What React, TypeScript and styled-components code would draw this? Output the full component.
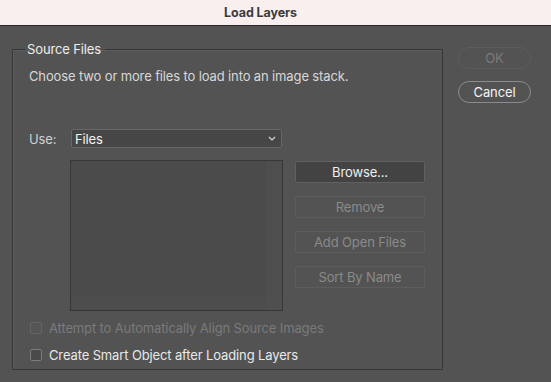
import React from 'react';
import styled, { createGlobalStyle } from 'styled-components';

const GlobalStyle = createGlobalStyle`
  html, body {
    margin: 0;
    padding: 0;
    background: #535353;
  }
  body {
    font-family: Inter, "Noto Sans", "Liberation Sans", sans-serif;
    font-size: 13px;
    letter-spacing: -0.13px;
    -webkit-font-smoothing: antialiased;
  }
`;

const Window = styled.div`
  width: 551px;
  height: 382px;
  background: #535353;
  display: flex;
  flex-direction: column;
  overflow: hidden;
`;

const TitleBar = styled.div`
  height: 26px;
  flex: none;
  box-sizing: border-box;
  padding-right: 30px;
  background: #f8efee;
  border-bottom: 1px solid #262626;
  display: flex;
  align-items: center;
  justify-content: center;
  color: #3b3b3b;
  font-weight: 700;
  font-size: 12.5px;
  letter-spacing: -0.1px;
`;

const Main = styled.div`
  display: flex;
  align-items: flex-start;
  padding: 15px 0 0 12px;
  gap: 15px;
`;

const Group = styled.fieldset`
  width: 431px;
  box-sizing: border-box;
  margin: 0;
  padding: 0;
  border: 1px solid #353535;
  box-shadow: inset 1px 1px 0 #5c5c5c;
  border-radius: 1px;
`;

const Legend = styled.legend`
  margin-left: 12px;
  padding: 0 4px 0 2px;
  line-height: 16px;
  color: #ededed;
  font-size: 13px;
`;

const GroupBody = styled.div`
  padding: 11px 16px 6px 16px;
  display: flex;
  flex-direction: column;
`;

const Description = styled.div`
  line-height: 16px;
  color: #d8d8d8;
`;

const UseRow = styled.div`
  margin-top: 45px;
  display: flex;
  align-items: center;
`;

const Label = styled.span`
  width: 42px;
  color: #d0d0d0;
`;

const Select = styled.div`
  width: 211px;
  height: 19px;
  box-sizing: border-box;
  background: #464646;
  border: 1px solid #676767;
  border-radius: 2px;
  display: flex;
  align-items: center;
  justify-content: space-between;
  padding: 0 5px 0 3px;
  color: #f2f2f2;
`;

const ListRow = styled.div`
  margin-top: 12px;
  display: flex;
  align-items: flex-start;
  padding-left: 41px;
  gap: 12px;
`;

const FileList = styled.div`
  width: 213px;
  height: 151px;
  box-sizing: border-box;
  background: #4b4b4b;
  border: 1px solid #373737;
  display: grid;
  grid-template-columns: 1fr 16px;
  grid-template-rows: 1fr 15px;
`;

const ListArea = styled.div<{ $tone: string }>`
  background: ${(p) => p.$tone};
`;

const ButtonStack = styled.div`
  padding-top: 1px;
  display: flex;
  flex-direction: column;
  gap: 13px;
`;

const SideButton = styled.div<{ $disabled?: boolean }>`
  width: 130px;
  height: 22px;
  box-sizing: border-box;
  border: 1px solid ${(p) => (p.$disabled ? '#5d5d5d' : '#606060')};
  border-radius: 2px;
  background: ${(p) => (p.$disabled ? '#535353' : '#434343')};
  color: ${(p) => (p.$disabled ? '#8a8a8a' : '#f0f0f0')};
  display: flex;
  align-items: center;
  justify-content: center;
`;

const CheckRow = styled.label<{ $disabled?: boolean; $top: number }>`
  margin-top: ${(p) => p.$top}px;
  display: flex;
  align-items: center;
  gap: 7px;
  padding-left: 1px;
  height: 16px;
  color: ${(p) => (p.$disabled ? '#7a7a7a' : '#e8e8e8')};
`;

const Box = styled.span<{ $disabled?: boolean }>`
  width: 12px;
  height: 12px;
  box-sizing: border-box;
  border: 1px solid ${(p) => (p.$disabled ? '#646464' : '#7c7c7c')};
  border-radius: 2px;
  background: ${(p) => (p.$disabled ? '#555555' : '#4a4a4a')};
`;

const SideColumn = styled.div`
  margin-top: 6px;
  display: flex;
  flex-direction: column;
  gap: 12px;
`;

const PillButton = styled.div<{ $disabled?: boolean }>`
  width: 73px;
  height: 22px;
  box-sizing: border-box;
  border-radius: 11px;
  border: 1px solid ${(p) => (p.$disabled ? '#5c5c5c' : '#8c8c8c')};
  color: ${(p) => (p.$disabled ? '#7a7a7a' : '#f4f4f4')};
  display: flex;
  align-items: center;
  justify-content: center;
  font-size: 13px;
`;

const Chevron = () => (
  <svg width="8" height="5" viewBox="0 0 8 5">
    <path d="M1 1 L4 4 L7 1" fill="none" stroke="#d8d8d8" strokeWidth="1.2" />
  </svg>
);

export default function App() {
  return (
    <Window>
      <GlobalStyle />
      <TitleBar>Load Layers</TitleBar>
      <Main>
        <Group>
          <Legend>Source Files</Legend>
          <GroupBody>
            <Description>Choose two or more files to load into an image stack.</Description>
            <UseRow>
              <Label>Use:</Label>
              <Select>
                <span>Files</span>
                <Chevron />
              </Select>
            </UseRow>
            <ListRow>
              <FileList>
                <ListArea $tone="#4b4b4b" />
                <ListArea $tone="#4e4e4e" />
                <ListArea $tone="#4d4d4d" />
                <ListArea $tone="#4f4f4f" />
              </FileList>
              <ButtonStack>
                <SideButton>Browse...</SideButton>
                <SideButton $disabled>Remove</SideButton>
                <SideButton $disabled>Add Open Files</SideButton>
                <SideButton $disabled>Sort By Name</SideButton>
              </ButtonStack>
            </ListRow>
            <CheckRow $disabled $top={9}>
              <Box $disabled />
              Attempt to Automatically Align Source Images
            </CheckRow>
            <CheckRow $top={11}>
              <Box />
              Create Smart Object after Loading Layers
            </CheckRow>
          </GroupBody>
        </Group>
        <SideColumn>
          <PillButton $disabled>OK</PillButton>
          <PillButton>Cancel</PillButton>
        </SideColumn>
      </Main>
    </Window>
  );
}
